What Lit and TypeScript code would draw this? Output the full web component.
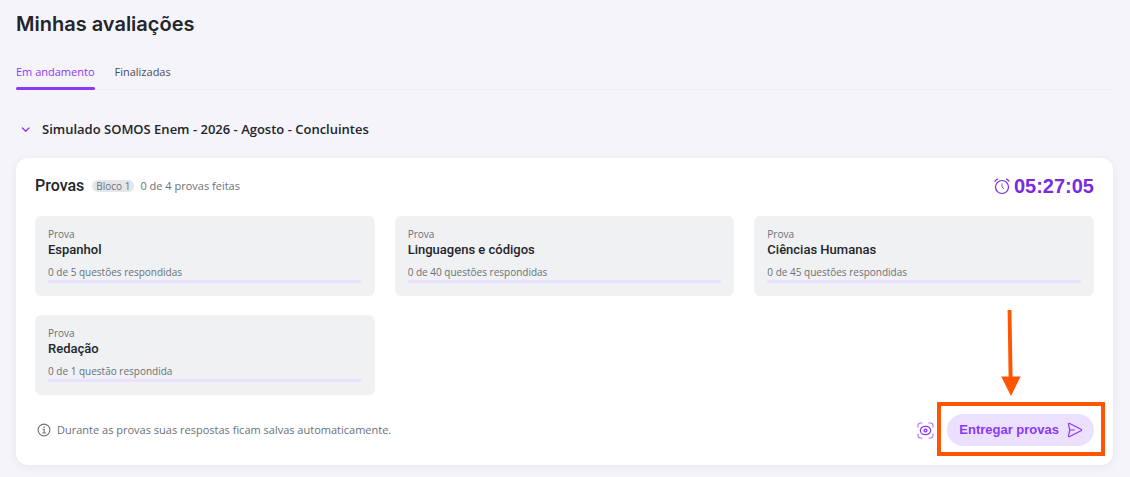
import { LitElement, html, css } from "lit";
import { customElement, property, state } from "lit/decorators.js";

interface Exam {
  name: string;
  answered: number;
  total: number;
}

const EXAMS: Exam[] = [
  { name: "Espanhol", answered: 0, total: 5 },
  { name: "Linguagens e códigos", answered: 0, total: 40 },
  { name: "Ciências Humanas", answered: 0, total: 45 },
  { name: "Redação", answered: 0, total: 1 },
];

@customElement("exam-card")
export class ExamCard extends LitElement {
  @property({ attribute: false }) exam!: Exam;

  static styles = css`
    :host {
      display: block;
      padding: 11px 13px 13px;
      border-radius: 6px;
      background: #eff1f3;
    }
    .kind,
    .status {
      margin: 0;
      font-size: 10px;
      line-height: 14px;
      color: #6b7078;
    }
    .name {
      margin: 0 0 6px;
      font: 500 13px/18px Roboto, sans-serif;
      color: #22252b;
    }
    .track {
      height: 3px;
      margin-top: 1px;
      border-radius: 2px;
      background: #ebe0ff;
      overflow: hidden;
    }
    .fill {
      height: 100%;
      background: #8a38f5;
    }
  `;

  render() {
    const { name, answered, total } = this.exam;
    const noun = total === 1 ? "questão respondida" : "questões respondidas";
    return html`
      <p class="kind">Prova</p>
      <h3 class="name">${name}</h3>
      <p class="status">${answered} de ${total} ${noun}</p>
      <div class="track"><div class="fill" style="width:${(answered / total) * 100}%"></div></div>
    `;
  }
}

@customElement("app-root")
export class AppRoot extends LitElement {
  @state() private tab = 0;

  static styles = css`
    :host {
      display: block;
      box-sizing: border-box;
      min-height: 100vh;
      padding: 8px 17px 12px 16px;
      background: #f5f4fa;
      font-family: "Open Sans", sans-serif;
      color: #22252b;
    }
    button {
      border: 0;
      margin: 0;
      padding: 0;
      background: none;
      font: inherit;
      color: inherit;
      cursor: pointer;
    }
    svg {
      display: block;
      flex: none;
      fill: none;
      stroke: currentColor;
      stroke-linecap: round;
      stroke-linejoin: round;
    }
    .title {
      margin: 0;
      font: 600 20px/32px Inter, sans-serif;
    }
    .tabs {
      display: flex;
      gap: 20px;
      margin-top: 20px;
      box-shadow: inset 0 -1px #efeef3;
    }
    .tab {
      height: 30px;
      padding-bottom: 6px;
      font-size: 11px;
      line-height: 16px;
      color: #4a4d55;
      position: relative;
    }
    .tab.active {
      color: #8a38f5;
    }
    .tab.active::after {
      content: "";
      position: absolute;
      left: 0;
      right: 0;
      bottom: 0;
      height: 3px;
      border-radius: 2px;
      background: #8a38f5;
    }
    .group {
      display: flex;
      align-items: center;
      gap: 10px;
      margin: 29px 0 19px;
      padding-left: 4px;
      font-size: 13px;
      font-weight: 600;
      line-height: 20px;
    }
    .chevron {
      color: #8a38f5;
      stroke-width: 1.3;
    }
    .panel {
      padding: 16px 19px 19px;
      border-radius: 12px;
      background: #fff;
      box-shadow: 0 2px 8px rgba(60, 50, 100, 0.08);
    }
    .head {
      display: flex;
      align-items: center;
      height: 24px;
      margin-bottom: 18px;
    }
    .heading {
      margin: 0 8px 0 0;
      font: 500 16px/24px Roboto, sans-serif;
    }
    .badge {
      padding: 0 4px;
      margin-right: 6px;
      border-radius: 6px;
      background: #e4e6e9;
      color: #6b7078;
      font-size: 10px;
      line-height: 12px;
    }
    .done {
      font-size: 11px;
      line-height: 16px;
      color: #6b7078;
    }
    .timer {
      display: flex;
      align-items: center;
      gap: 4px;
      margin-left: auto;
      color: #7a2be0;
      font: 700 20px/24px "Liberation Sans", sans-serif;
    }
    .grid {
      display: grid;
      grid-template-columns: repeat(3, 1fr);
      gap: 19px 20px;
    }
    .foot {
      display: flex;
      align-items: center;
      margin-top: 19px;
    }
    .note {
      display: flex;
      align-items: center;
      gap: 6px;
      margin: 0;
      padding-left: 2px;
      font-size: 11px;
      line-height: 16px;
      color: #6b7078;
    }
    .view {
      margin: 0 13px 0 auto;
      color: #8a38f5;
    }
    .submit-area {
      position: relative;
    }
    .submit {
      display: flex;
      align-items: center;
      gap: 8px;
      height: 32px;
      padding: 0 11px 0 12px;
      border-radius: 16px;
      background: #ebe0ff;
      color: #8a38f5;
      font: 700 13px/16px "Liberation Sans", sans-serif;
    }
    .frame {
      position: absolute;
      inset: -12px -11px -10px -10px;
      border: 4px solid #ff5500;
      pointer-events: none;
    }
    .arrow {
      position: absolute;
      right: 72px;
      bottom: 50px;
      fill: #ff5500;
      stroke: none;
      pointer-events: none;
    }
  `;

  render() {
    return html`
      <h1 class="title">Minhas avaliações</h1>
      <div class="tabs" role="tablist">
        ${["Em andamento", "Finalizadas"].map(
          (label, i) => html`<button
            class="tab ${this.tab === i ? "active" : ""}"
            role="tab"
            aria-selected=${this.tab === i}
            @click=${() => (this.tab = i)}
          >${label}</button>`
        )}
      </div>
      <button class="group" aria-expanded="true">
        <svg class="chevron" width="12" height="12" viewBox="0 0 12 12"><path d="M2.4 5 5.7 8.2 9 5" /></svg>
        Simulado SOMOS Enem - 2026 - Agosto - Concluintes
      </button>
      <section class="panel">
        <header class="head">
          <h2 class="heading">Provas</h2>
          <span class="badge">Bloco 1</span>
          <span class="done">0 de 4 provas feitas</span>
          <div class="timer" role="timer">
            <svg width="16" height="18" viewBox="0 0 16 18" stroke-width="1.2">
              <circle cx="8" cy="10" r="6.5" />
              <path d="M8 6.8V10l1.8 1.8" stroke-width="1" stroke-opacity=".8" />
              <path d="M1 4.2Q1.8 2.6 3.6 2.1M15 4.2Q14.2 2.6 12.4 2.1" />
            </svg>
            <span>05:27:05</span>
          </div>
        </header>
        <div class="grid">${EXAMS.map((e) => html`<exam-card .exam=${e}></exam-card>`)}</div>
        <footer class="foot">
          <p class="note">
            <svg width="14" height="14" viewBox="0 0 14 14" stroke-width="1.1">
              <circle cx="7" cy="7" r="5.9" />
              <path d="M5.9 6.2H7.2V10M5.7 10H8.6" />
              <circle cx="7" cy="4.1" r=".4" fill="currentColor" stroke-width=".6" />
            </svg>
            Durante as provas suas respostas ficam salvas automaticamente.
          </p>
          <button class="view" aria-label="Visualizar">
            <svg width="17" height="17" viewBox="0 0 17 17" stroke-width="1.1">
              <path stroke-opacity=".7" d="M1 5V3.5Q1 1 3.5 1H5M12 1h1.5Q16 1 16 3.5V5M16 12v1.5Q16 16 13.5 16H12M5 16H3.5Q1 16 1 13.5V12" />
              <ellipse cx="8.5" cy="8.5" rx="5.2" ry="4.2" stroke-width="1.2" />
              <circle cx="8.5" cy="8.5" r="1.4" stroke-width="1.4" />
            </svg>
          </button>
          <div class="submit-area">
            <button class="submit">
              Entregar provas
              <svg width="16" height="16" viewBox="0 0 16 16" stroke-width="1.2">
                <path d="M1.5 2.4Q1.3 .9 2.7 1.5L14 7.2Q15.2 8 14 8.8L2.7 14.5Q1.3 15.1 1.5 13.6L2.8 8ZM2.8 8H7.4" />
              </svg>
            </button>
            <div class="frame"></div>
            <svg class="arrow" width="22" height="86" viewBox="0 0 22 86">
              <path d="M7.6 0H11.4L12.6 66.5H20.6L11 86 1.2 66.5H8.6Z" />
            </svg>
          </div>
        </footer>
      </section>
    `;
  }
}
